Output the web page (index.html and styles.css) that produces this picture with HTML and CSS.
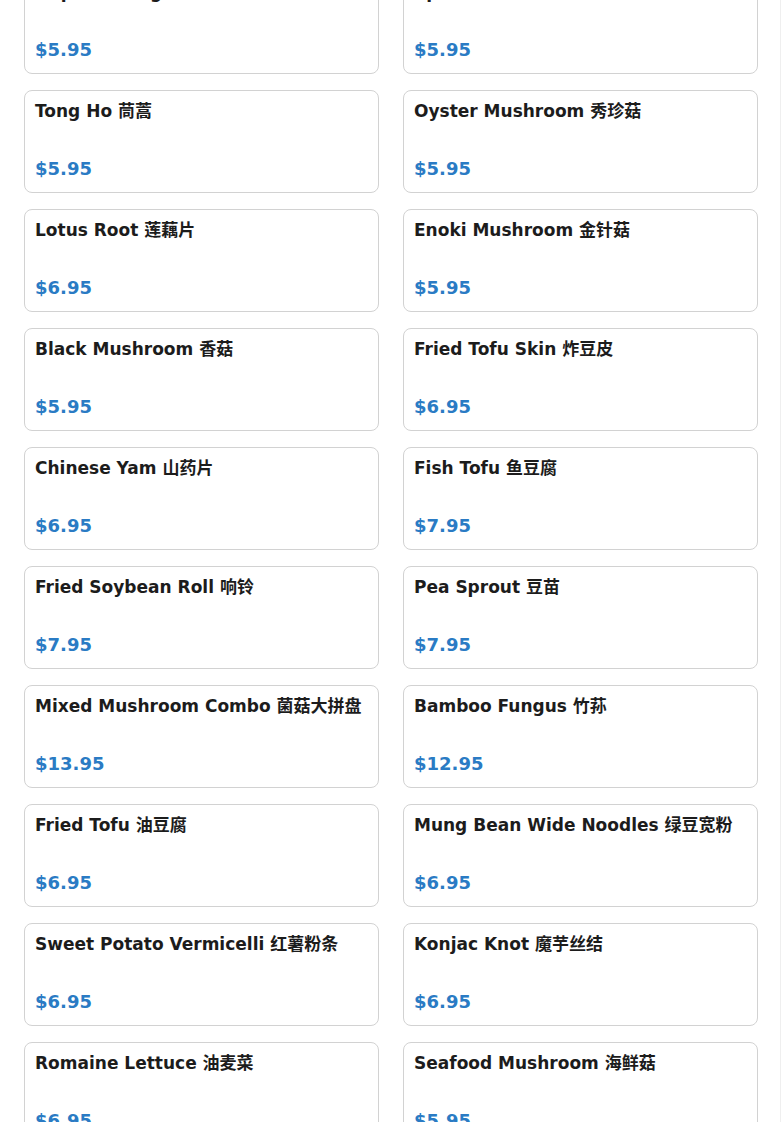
FILE: index.html
```html
<!DOCTYPE html>
<html lang="en">
<head>
<meta charset="utf-8">
<title>Menu</title>
<link rel="stylesheet" href="styles.css">
</head>
<body>
<div class="page">
  <div class="grid">
    <div class="card"><h3 class="name">Napa Cabbage 大白菜</h3><div class="price">$5.95</div></div>
    <div class="card"><h3 class="name">Spinach 菠菜</h3><div class="price">$5.95</div></div>
    <div class="card"><h3 class="name">Tong Ho 茼蒿</h3><div class="price">$5.95</div></div>
    <div class="card"><h3 class="name">Oyster Mushroom 秀珍菇</h3><div class="price">$5.95</div></div>
    <div class="card"><h3 class="name">Lotus Root 莲藕片</h3><div class="price">$6.95</div></div>
    <div class="card"><h3 class="name">Enoki Mushroom 金针菇</h3><div class="price">$5.95</div></div>
    <div class="card"><h3 class="name">Black Mushroom 香菇</h3><div class="price">$5.95</div></div>
    <div class="card"><h3 class="name">Fried Tofu Skin 炸豆皮</h3><div class="price">$6.95</div></div>
    <div class="card"><h3 class="name">Chinese Yam 山药片</h3><div class="price">$6.95</div></div>
    <div class="card"><h3 class="name">Fish Tofu 鱼豆腐</h3><div class="price">$7.95</div></div>
    <div class="card"><h3 class="name">Fried Soybean Roll 响铃</h3><div class="price">$7.95</div></div>
    <div class="card"><h3 class="name">Pea Sprout 豆苗</h3><div class="price">$7.95</div></div>
    <div class="card"><h3 class="name">Mixed Mushroom Combo 菌菇大拼盘</h3><div class="price">$13.95</div></div>
    <div class="card"><h3 class="name">Bamboo Fungus 竹荪</h3><div class="price">$12.95</div></div>
    <div class="card"><h3 class="name">Fried Tofu 油豆腐</h3><div class="price">$6.95</div></div>
    <div class="card"><h3 class="name">Mung Bean Wide Noodles 绿豆宽粉</h3><div class="price">$6.95</div></div>
    <div class="card"><h3 class="name">Sweet Potato Vermicelli 红薯粉条</h3><div class="price">$6.95</div></div>
    <div class="card"><h3 class="name">Konjac Knot 魔芋丝结</h3><div class="price">$6.95</div></div>
    <div class="card"><h3 class="name">Romaine Lettuce 油麦菜</h3><div class="price">$6.95</div></div>
    <div class="card"><h3 class="name">Seafood Mushroom 海鲜菇</h3><div class="price">$5.95</div></div>
  </div>
</div>
</body>
</html>
```

FILE: styles.css
```css
html, body {
  margin: 0;
  padding: 0;
  background: #ffffff;
}

body {
  font-family: "DejaVu Sans", "Noto Sans CJK SC", sans-serif;
  color: #1c1c1c;
}

.page {
  padding: 0 24px;
  min-height: 1122px;
  box-sizing: border-box;
  background: linear-gradient(to left, #ffffff 0 1px, #efefef 1px 2px, #ffffff 2px);
}

.grid {
  display: grid;
  grid-template-columns: 1fr 1fr;
  column-gap: 24px;
  row-gap: 16px;
  margin-top: -29.5px;
}

.card {
  border: 1px solid #d2d2d2;
  border-radius: 8px;
  padding: 10px 10px 13.1px;
  display: flex;
  flex-direction: column;
  background: #ffffff;
}

.name {
  margin: 0;
  font-size: 17px;
  font-weight: bold;
  line-height: 20px;
  color: #1c1c1c;
}

.price {
  margin-top: 37px;
  font-size: 18px;
  font-weight: bold;
  color: #2a7bc4;
  line-height: 21px;
}
```
